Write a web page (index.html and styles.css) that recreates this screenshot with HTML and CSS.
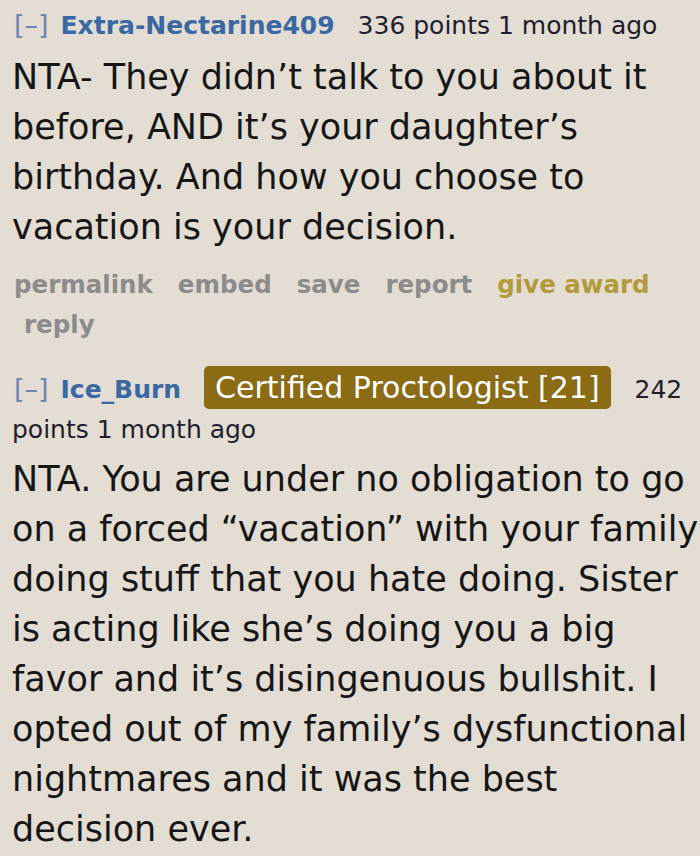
FILE: index.html
```html
<!DOCTYPE html>
<html lang="en">
<head>
<meta charset="utf-8">
<title>Comments</title>
<link rel="stylesheet" href="styles.css">
</head>
<body>
<div class="comments">
  <div class="comment">
    <p class="tagline"><a class="expand">[–]</a> <a class="author">Extra-Nectarine409</a> <span class="meta">336 points 1 month ago</span></p>
    <div class="md">NTA- They didn’t talk to you about it before, AND it’s your daughter’s birthday. And how you choose to vacation is your decision.</div>
    <ul class="buttons">
      <li>permalink</li>
      <li>embed</li>
      <li>save</li>
      <li>report</li>
      <li class="award">give award</li>
      <li class="reply">reply</li>
    </ul>
  </div>
  <div class="comment second">
    <p class="tagline"><a class="expand">[–]</a> <a class="author">Ice_Burn</a> <span class="flair">Certified Proctologist [21]</span> <span class="score">242</span> <span class="time">points 1 month ago</span></p>
    <div class="md">NTA. You are under no obligation to go on a forced “vacation” with your family doing stuff that you hate doing. Sister is acting like she’s doing you a big favor and it’s disingenuous bullshit. I opted out of my family’s dysfunctional nightmares and it was the best decision ever.</div>
  </div>
</div>
</body>
</html>
```
FILE: styles.css
```css
html, body {
  margin: 0;
  padding: 0;
  background: #e3ddd4;
}
body {
  font-family: "DejaVu Sans", Verdana, sans-serif;
  color: #161616;
}
.comments {
  padding: 6px 0 0 12px;
}
.tagline {
  margin: 0;
  font-size: 25px;
  line-height: 40px;
  color: #1e2030;
}
.expand {
  font-weight: normal;
  font-size: 27px;
  line-height: 1;
  color: #6f86b3;
  padding-left: 2px;
  margin-right: 4px;
}
.author {
  font-weight: bold;
  color: #3a68a2;
}
.meta {
  padding-left: 15px;
}
.md {
  font-size: 35px;
  line-height: 50px;
  margin-top: 6px;
}
.buttons {
  list-style: none;
  margin: 13px 0 0;
  padding: 0 0 0 2px;
  font-size: 24.5px;
  line-height: 40px;
  font-weight: bold;
  color: #8c8c8c;
  display: flex;
  flex-wrap: wrap;
  column-gap: 25px;
}
.buttons .award {
  color: #b39a3a;
}
.buttons .reply {
  padding-left: 10px;
}
.second {
  margin-top: 23px;
}
.flair {
  background: #8b6b14;
  color: #ffffff;
  font-size: 30px;
  padding: 4px 11px;
  border-radius: 5px;
  margin-left: 15px;
  margin-right: 16px;
}
.second .md {
  margin-top: 4px;
}
```
